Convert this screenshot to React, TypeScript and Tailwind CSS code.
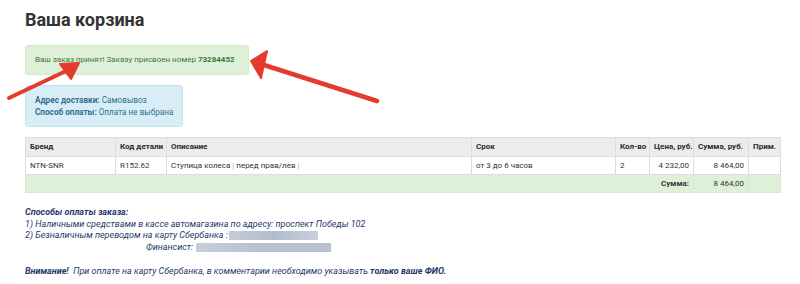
import React from "react";

export default function App() {
  return (
    <div className="relative w-[800px] h-[284px] bg-white overflow-hidden" style={{ fontFamily: "Roboto, 'Liberation Sans', sans-serif" }}>
      <div className="pl-[25px] pr-[20px] pt-[8px]">
        <h1 className="text-[18px] leading-[24px] font-bold text-[#333]">Ваша корзина</h1>
        <div className="mt-[13px] w-[224px] h-[30px] bg-[#dff0d8] border border-[#d6e9c6] rounded-[3px] pl-[9px] flex items-center text-[8px] text-[#3c763d] whitespace-nowrap">
          <span>Ваш заказ принят! Заказу присвоен номер <b>73284452</b></span>
        </div>
        <div className="mt-[10px] w-[158px] h-[42px] bg-[#d9edf7] border border-[#bce8f1] rounded-[3px] pl-[9px] flex flex-col justify-center text-[8.2px] leading-[12px] text-[#31708f] whitespace-nowrap">
          <div><b>Адрес доставки:</b> Самовывоз</div>
          <div><b>Способ оплаты:</b> Оплата не выбрана</div>
        </div>
        <table className="mt-[10px] w-[755px] border-collapse table-fixed text-[8px] text-[#333]">
          <colgroup>
            <col className="w-[90px]" />
            <col className="w-[51px]" />
            <col className="w-[305px]" />
            <col className="w-[144px]" />
            <col className="w-[34px]" />
            <col className="w-[44px]" />
            <col className="w-[55px]" />
            <col className="w-[32px]" />
          </colgroup>
          <thead>
            <tr className="bg-[#ececec] h-[19px]">
              {["Бренд", "Код детали", "Описание", "Срок", "Кол-во", "Цена, руб.", "Сумма, руб.", "Прим."].map((h) => (
                <th key={h} className="border border-[#dddddd] text-left font-bold px-[4px] whitespace-nowrap text-[#2b2b2b]">{h}</th>
              ))}
            </tr>
          </thead>
          <tbody>
            <tr className="h-[18px]">
              <td className="border border-[#dddddd] px-[4px]">NTN-SNR</td>
              <td className="border border-[#dddddd] px-[4px]">R152.62</td>
              <td className="border border-[#dddddd] px-[4px]">Ступица колеса <span className="text-[#9aa6c8]">|</span> перед прав/лев <span className="text-[#9aa6c8]">|</span></td>
              <td className="border border-[#dddddd] px-[4px]">от 3 до 6 часов</td>
              <td className="border border-[#dddddd] px-[4px]">2</td>
              <td className="border border-[#dddddd] px-[4px] text-right">4 232,00</td>
              <td className="border border-[#dddddd] px-[4px] text-right">8 464,00</td>
              <td className="border border-[#dddddd] px-[4px]"></td>
            </tr>
            <tr className="h-[18px] bg-[#dff0d8]">
              <td colSpan={6} className="border border-[#d6e9c6] px-[4px] text-right font-bold">Сумма:</td>
              <td className="border border-[#d6e9c6] px-[4px] text-right">8 464,00</td>
              <td className="border border-[#d6e9c6] px-[4px]"></td>
            </tr>
          </tbody>
        </table>
        <div className="mt-[14px] text-[9px] leading-[11.5px] italic text-[#1f3a6b] whitespace-nowrap">
          <div className="font-bold">Способы оплаты заказа:</div>
          <div>1) Наличными средствами в кассе автомагазина по адресу: проспект Победы 102</div>
          <div className="flex items-center">
            <span>2) Безналичным переводом на карту Сбербанка :</span>
            <span className="ml-[1px] inline-block w-[89px] h-[9px] bg-gradient-to-r from-[#c4ccd8] via-[#b3bccb] to-[#c8d0dc]" />
          </div>
          <div className="flex items-center pl-[121px]">
            <span>Финансист:</span>
            <span className="ml-[3px] inline-block w-[135px] h-[9px] bg-gradient-to-r from-[#c6ceda] via-[#b7c0ce] to-[#b9c2d0]" />
          </div>
          <div className="mt-[13px]">
            <b>Внимание!</b>&nbsp; При оплате на карту Сбербанка, в комментарии необходимо указывать <b>только ваше ФИО.</b>
          </div>
        </div>
      </div>
      <svg className="absolute left-0 top-0 pointer-events-none" width="800" height="284" viewBox="0 0 800 284">
        <g fill="#e53a2e" stroke="#e53a2e" strokeLinejoin="round" strokeLinecap="round">
          <line x1="9" y1="98" x2="66" y2="71" strokeWidth="4" />
          <polygon points="79,63 60,64 71,79" strokeWidth="2" />
          <line x1="377" y1="101" x2="264" y2="65" strokeWidth="4.5" />
          <polygon points="251,61 267,51 261,78" strokeWidth="2" />
        </g>
      </svg>
    </div>
  );
}
